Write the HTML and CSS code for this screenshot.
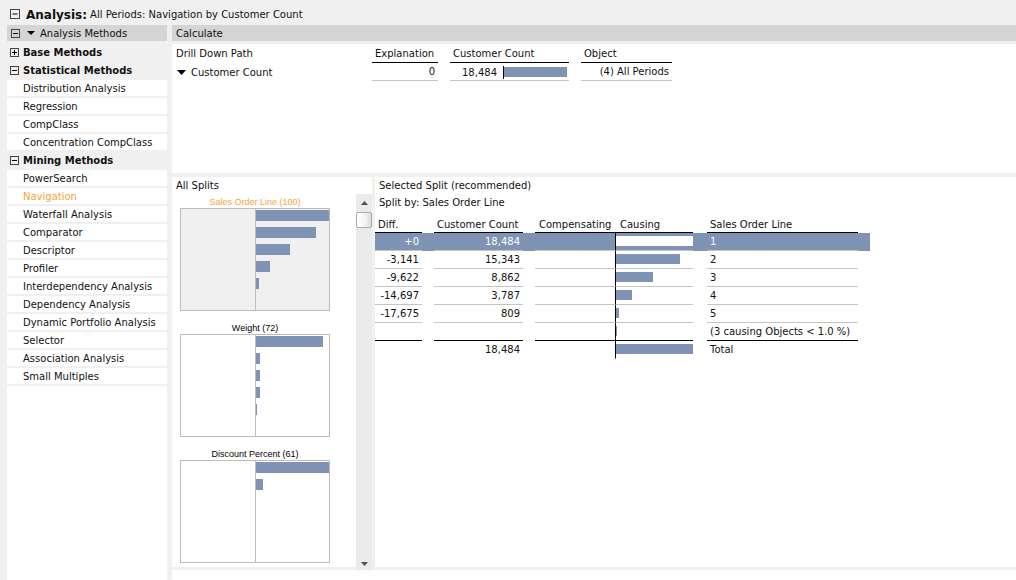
FILE: index.html
```html
<!DOCTYPE html>
<html>
<head>
<meta charset="utf-8">
<link rel="stylesheet" href="styles.css">
</head>
<body>
<div class="titlebar">
  <svg class="box" width="10" height="10" viewBox="0 0 10 10"><rect x="0.5" y="0.5" width="9" height="9" fill="none" stroke="#444"/><path d="M2.5 5h5" stroke="#000"/></svg>
  <span class="title-main">Analysis:</span>
  <span class="title-sub">All Periods: Navigation by Customer Count</span>
</div>
<div class="main">
  <aside class="sidebar">
    <div class="side-head">
      <svg class="box" width="9" height="9" viewBox="0 0 9 9"><rect x="0.5" y="0.5" width="8" height="8" fill="none" stroke="#444"/><path d="M2 4.5h5" stroke="#000"/></svg>
      <svg class="tri" width="8" height="4" viewBox="0 0 8 4"><polygon points="0,0 8,0 4,4" fill="#000"/></svg>
      <span>Analysis Methods</span>
    </div>
    <ul class="tree">
      <li class="group"><svg class="box" width="9" height="9" viewBox="0 0 9 9"><rect x="0.5" y="0.5" width="8" height="8" fill="none" stroke="#444"/><path d="M2 4.5h5M4.5 2v5" stroke="#000"/></svg><span>Base Methods</span></li>
      <li class="group"><svg class="box" width="9" height="9" viewBox="0 0 9 9"><rect x="0.5" y="0.5" width="8" height="8" fill="none" stroke="#444"/><path d="M2 4.5h5" stroke="#000"/></svg><span>Statistical Methods</span></li>
      <li>Distribution Analysis</li>
      <li>Regression</li>
      <li>CompClass</li>
      <li>Concentration CompClass</li>
      <li class="group"><svg class="box" width="9" height="9" viewBox="0 0 9 9"><rect x="0.5" y="0.5" width="8" height="8" fill="none" stroke="#444"/><path d="M2 4.5h5" stroke="#000"/></svg><span>Mining Methods</span></li>
      <li>PowerSearch</li>
      <li class="active">Navigation</li>
      <li>Waterfall Analysis</li>
      <li>Comparator</li>
      <li>Descriptor</li>
      <li>Profiler</li>
      <li>Interdependency Analysis</li>
      <li>Dependency Analysis</li>
      <li>Dynamic Portfolio Analysis</li>
      <li>Selector</li>
      <li>Association Analysis</li>
      <li>Small Multiples</li>
    </ul>
  </aside>
  <section class="content">
    <div class="calc-head">Calculate</div>
    <div class="top">
      <div class="drill">
        <div class="drill-title">Drill Down Path</div>
        <div class="drill-row">
          <svg class="dtri" width="9" height="5" viewBox="0 0 9 5"><polygon points="0,0 9,0 4.5,5" fill="#000"/></svg>
          <span>Customer Count</span>
        </div>
      </div>
      <div class="ttable">
        <div class="tcol col-exp">
          <div class="th">Explanation</div>
          <div class="td right">0</div>
        </div>
        <div class="tcol col-cc">
          <div class="th">Customer Count</div>
          <div class="td split">
            <span class="num">18,484</span>
            <span class="barcell"><span class="bar" style="width:63px"></span></span>
          </div>
        </div>
        <div class="tcol col-obj">
          <div class="th">Object</div>
          <div class="td right">(4) All Periods</div>
        </div>
      </div>
    </div>
    <div class="lower">
      <div class="splits">
        <div class="splits-title">All Splits</div>
        <div class="splits-body">
          <div class="charts">
            <div class="chart">
              <div class="ctitle orange">Sales Order Line (100)</div>
              <div class="cbox selected">
                <div class="cleft"></div>
                <div class="cright">
                  <span class="cbar" style="width:73px"></span>
                  <span class="cbar" style="width:60px"></span>
                  <span class="cbar" style="width:34px"></span>
                  <span class="cbar" style="width:14px"></span>
                  <span class="cbar" style="width:3px"></span>
                </div>
              </div>
            </div>
            <div class="chart">
              <div class="ctitle">Weight (72)</div>
              <div class="cbox">
                <div class="cleft"></div>
                <div class="cright">
                  <span class="cbar" style="width:67px"></span>
                  <span class="cbar" style="width:4px"></span>
                  <span class="cbar" style="width:4px"></span>
                  <span class="cbar" style="width:4px"></span>
                  <span class="cbar" style="width:1px"></span>
                </div>
              </div>
            </div>
            <div class="chart">
              <div class="ctitle">Discount Percent (61)</div>
              <div class="cbox">
                <div class="cleft"></div>
                <div class="cright">
                  <span class="cbar" style="width:73px"></span>
                  <span class="cbar" style="width:7px"></span>
                </div>
              </div>
            </div>
          </div>
          <div class="scroll">
            <div class="sb-btn"><svg width="7" height="4" viewBox="0 0 7 4"><polygon points="0,4 7,4 3.5,0" fill="#505050"/></svg></div>
            <div class="thumb"></div>
            <div class="sb-track"></div>
            <div class="sb-btn"><svg width="7" height="4" viewBox="0 0 7 4"><polygon points="0,0 7,0 3.5,4" fill="#505050"/></svg></div>
          </div>
        </div>
      </div>
      <div class="sel">
        <div class="sel-title">Selected Split (recommended)</div>
        <div class="sel-title second">Split by: Sales Order Line</div>
        <div class="ltable">
          <div class="lrow lhead">
            <div class="c c-diff">Diff.</div>
            <div class="c c-cc">Customer Count</div>
            <div class="c c-comp">Compensating</div>
            <div class="c c-cause">Causing</div>
            <div class="c c-sol">Sales Order Line</div>
          </div>
          <div class="lrow ldata active">
            <div class="c c-diff">+0</div>
            <div class="c c-cc">18,484</div>
            <div class="c c-comp"></div>
            <div class="c c-cause"><span class="cbar white" style="width:77px"></span></div>
            <div class="c c-sol">1</div>
          </div>
          <div class="lrow ldata">
            <div class="c c-diff">-3,141</div>
            <div class="c c-cc">15,343</div>
            <div class="c c-comp"></div>
            <div class="c c-cause"><span class="cbar" style="width:64px"></span></div>
            <div class="c c-sol">2</div>
          </div>
          <div class="lrow ldata">
            <div class="c c-diff">-9,622</div>
            <div class="c c-cc">8,862</div>
            <div class="c c-comp"></div>
            <div class="c c-cause"><span class="cbar" style="width:37px"></span></div>
            <div class="c c-sol">3</div>
          </div>
          <div class="lrow ldata">
            <div class="c c-diff">-14,697</div>
            <div class="c c-cc">3,787</div>
            <div class="c c-comp"></div>
            <div class="c c-cause"><span class="cbar" style="width:16px"></span></div>
            <div class="c c-sol">4</div>
          </div>
          <div class="lrow ldata">
            <div class="c c-diff">-17,675</div>
            <div class="c c-cc">809</div>
            <div class="c c-comp"></div>
            <div class="c c-cause"><span class="cbar" style="width:3px"></span></div>
            <div class="c c-sol">5</div>
          </div>
          <div class="lrow ldata last">
            <div class="c c-diff"></div>
            <div class="c c-cc"></div>
            <div class="c c-comp"></div>
            <div class="c c-cause"><span class="cbar" style="width:1px"></span></div>
            <div class="c c-sol">(3 causing Objects &lt; 1.0 %)</div>
          </div>
          <div class="lrow ldata total">
            <div class="c c-diff"></div>
            <div class="c c-cc">18,484</div>
            <div class="c c-comp"></div>
            <div class="c c-cause"><span class="cbar" style="width:77px"></span></div>
            <div class="c c-sol">Total</div>
          </div>
        </div>
      </div>
    </div>
    <div class="footer"></div>
  </section>
</div>
</body>
</html>
```

FILE: styles.css
```css
* { box-sizing: border-box; }
html, body { margin: 0; padding: 0; }
body {
  width: 1016px;
  height: 580px;
  overflow: hidden;
  background: #f0f0f0;
  font-family: "DejaVu Sans", Verdana, sans-serif;
  font-size: 10px;
  color: #111;
}
svg { display: block; flex: none; }

.titlebar {
  height: 25px;
  display: flex;
  align-items: center;
  padding: 4px 0 0 10px;
}
.titlebar .box { margin-right: 6px; margin-top: -1px; }
.title-main { font-weight: bold; font-size: 12px; margin-right: 3px; }

.main { display: flex; height: 555px; }

.sidebar {
  width: 160px;
  margin-left: 7px;
  margin-right: 5px;
  background: #fff;
  display: flex;
  flex-direction: column;
}
.side-head {
  height: 19px;
  background: #d4d4d4;
  border-bottom: 3px solid #f0f0f0;
  display: flex;
  align-items: center;
  padding-left: 4px;
}
.side-head span { padding-top: 1px; }
.side-head .tri { margin-left: 7px; margin-right: 5px; }

.tree { list-style: none; margin: 0; padding: 0; }
.tree li {
  height: 18px;
  line-height: 16px;
  padding-top: 1px;
  border-bottom: 2px solid #f0f0f0;
  padding-left: 16px;
  white-space: nowrap;
  overflow: visible;
}
.tree li.group {
  background: #f0f0f0;
  font-weight: bold;
  padding-left: 3px;
  padding-top: 0;
  display: flex;
  align-items: center;
}
.tree li.group span { padding-top: 1px; }
.tree li.group .box { margin-right: 4px; }
.tree li.active { color: #f7a238; }

.content { flex: 1; display: flex; flex-direction: column; }
.calc-head {
  height: 19px;
  background: #d4d4d4;
  border-bottom: 3px solid #f0f0f0;
  line-height: 16px;
  padding-left: 4px;
  padding-top: 1px;
}

.top {
  height: 129px;
  background: #fff;
  margin-bottom: 4px;
  display: flex;
}
.drill { width: 200px; padding-left: 4px; }
.drill-title { height: 19px; line-height: 18px; padding-top: 1px; }
.drill-row { height: 18px; display: flex; align-items: center; }
.drill-row span { padding-top: 1px; }
.drill-row .dtri { margin-left: 1px; margin-right: 5px; }

.ttable { display: flex; }
.tcol { margin-right: 12px; }
.col-exp { width: 66px; }
.col-cc { width: 119px; }
.col-obj { width: 91px; }
.th {
  height: 19px;
  line-height: 16px;
  padding-top: 2px;
  border-bottom: 1px solid #000;
  padding-left: 3px;
}
.td {
  height: 18px;
  line-height: 17px;
  border-bottom: 1px solid #c4c4c4;
}
.td.right { text-align: right; padding-right: 3px; padding-top: 1px; line-height: 16px; }
.td.split { display: flex; align-items: center; }
.td .num { width: 53px; text-align: right; padding-right: 6px; padding-top: 1px; }
.barcell {
  height: 13px;
  border-left: 1px solid #000;
  padding-top: 1px;
  margin-top: 1px;
}
.bar { display: block; height: 10px; background: #7f93b5; }

.lower { height: 390px; display: flex; margin-bottom: 3px; }
.splits { width: 200px; background: #fff; display: flex; flex-direction: column; }
.splits-title { height: 19px; line-height: 17px; padding-left: 4px; }
.splits-body { flex: 1; display: flex; }
.charts { width: 184px; padding-left: 8px; overflow: hidden; }
.chart { margin-bottom: 9px; width: 150px; }
.ctitle {
  height: 14px;
  line-height: 13px;
  padding-top: 2px;
  text-align: center;
  font-family: "Liberation Sans", Arial, sans-serif;
  font-size: 9px;
  color: #000;
  white-space: nowrap;
}
.ctitle.orange { color: #f9a23a; }
.cbox {
  height: 103px;
  border: 1px solid #bdbdbd;
  display: flex;
  background: #fff;
}
.cbox.selected { background: #f0f0f0; }
.cleft { width: 74px; }
.cright {
  flex: 1;
  border-left: 1px solid #bdbdbd;
  padding-top: 1px;
  display: flex;
  flex-direction: column;
  gap: 6px;
}
.cbar { display: block; height: 11px; background: #7f93b5; flex: none; }

.scroll {
  width: 16px;
  background: #ebebeb;
  display: flex;
  flex-direction: column;
}
.sb-btn { height: 17px; display: flex; align-items: center; justify-content: center; }
.thumb {
  height: 16px;
  margin-top: 1px;
  border: 1px solid #a9a9a9;
  border-radius: 2px;
  background: linear-gradient(to right, #fefefe, #f2f2f2 60%, #d9d9d9);
}
.sb-track { flex: 1; }

.sel { flex: 1; background: #fff; margin-left: 3px; }
.sel-title { height: 17px; line-height: 17px; padding-left: 4px; }
.sel-title.second { padding-top: 1px; line-height: 16px; }

.ltable { display: flex; flex-direction: column; }
.lrow { display: flex; width: 495px; }
.c { white-space: nowrap; }
.c-diff { width: 47px; margin-right: 12px; }
.c-cc { width: 89px; margin-right: 12px; }
.c-comp { width: 80px; }
.c-cause { width: 78px; margin-right: 14px; }
.c-sol { width: 151px; }

.lhead .c {
  height: 22px;
  border-bottom: 1px solid #000;
  line-height: 16px;
  padding-top: 6px;
  padding-left: 3px;
}
.lhead .c-comp { padding-left: 4px; }
.lhead .c-cause { padding-left: 5px; }

.ldata .c {
  height: 18px;
  line-height: 16px;
  padding-top: 1px;
  border-bottom: 1px solid #c4c4c4;
}
.ldata .c-diff, .ldata .c-cc { text-align: right; padding-right: 3px; }
.ldata .c-sol { padding-left: 3px; }
.ldata .c-cause {
  border-left: 1px solid #000;
  display: flex;
  align-items: center;
  padding-top: 0;
  padding-bottom: 1px;
}
.ldata .c-cause .cbar { height: 10px; }
.ldata.last .c { border-bottom-color: #000; }
.ldata.total .c { border-bottom-color: transparent; }
.ldata.active { background: #7f93b5; color: #fff; }
.cbar.white { background: #fff; }

.footer { flex: 1; background: #fff; }
```
